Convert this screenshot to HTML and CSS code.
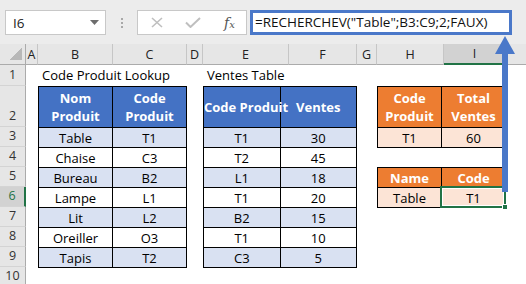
FILE: index.html
```html
<!DOCTYPE html>
<html lang="fr">
<head>
    <meta charset="UTF-8">
    <meta name="viewport" content="width=device-width, initial-scale=1.0">
    <title>RECHERCHEV</title>
    <link rel="stylesheet" href="styles.css">
</head>
<body>
    <div class="app">

        <div class="toolbar">
            <div class="name-box">
                <span>I6</span>
                <svg class="caret" width="9" height="5" viewBox="0 0 9 5"><path d="M0 0h9L4.5 5z" fill="#6d6d6d"/></svg>
            </div>
            <div class="grip">
                <span></span><span></span><span></span>
            </div>
            <div class="fx-box">
                <svg width="12" height="11" viewBox="0 0 12 11"><path d="M1 1l10 9M11 1L1 10" stroke="#bfbfbf" stroke-width="1.6" fill="none"/></svg>
                <svg width="16" height="11" viewBox="0 0 16 11"><path d="M1 5.5l4.5 4.5L15 1" stroke="#bfbfbf" stroke-width="2" fill="none"/></svg>
                <span class="fx">f<small>x</small></span>
            </div>
            <div class="formula">=RECHERCHEV("Table";B3:C9;2;FAUX)</div>
        </div>

        <div class="sheet">
            <div class="corner"></div>
            <div class="col-head">A</div>
            <div class="col-head">B</div>
            <div class="col-head">C</div>
            <div class="col-head">D</div>
            <div class="col-head">E</div>
            <div class="col-head">F</div>
            <div class="col-head">G</div>
            <div class="col-head">H</div>
            <div class="col-head active">I</div>
            <div class="col-head last"></div>

            <div class="row-head r1">1</div>
            <div class="row-head r2">2</div>
            <div class="row-head r3">3</div>
            <div class="row-head r4">4</div>
            <div class="row-head r5">5</div>
            <div class="row-head r6 active">6</div>
            <div class="row-head r7">7</div>
            <div class="row-head r8">8</div>
            <div class="row-head r9">9</div>
            <div class="row-head r10">10</div>

            <div class="label label-lookup">Code Produit Lookup</div>
            <div class="label label-ventes">Ventes Table</div>

            <table class="tbl tbl-products">
                <tr class="head"><th>Nom<br>Produit</th><th>Code<br>Produit</th></tr>
                <tr class="band"><td>Table</td><td>T1</td></tr>
                <tr><td>Chaise</td><td>C3</td></tr>
                <tr class="band"><td>Bureau</td><td>B2</td></tr>
                <tr><td>Lampe</td><td>L1</td></tr>
                <tr class="band"><td>Lit</td><td>L2</td></tr>
                <tr><td>Oreiller</td><td>O3</td></tr>
                <tr class="band"><td>Tapis</td><td>T2</td></tr>
            </table>

            <table class="tbl tbl-sales">
                <tr class="head"><th>Code Produit</th><th>Ventes</th></tr>
                <tr class="band"><td>T1</td><td>30</td></tr>
                <tr><td>T2</td><td>45</td></tr>
                <tr class="band"><td>L1</td><td>18</td></tr>
                <tr><td>T1</td><td>20</td></tr>
                <tr class="band"><td>B2</td><td>15</td></tr>
                <tr><td>T1</td><td>10</td></tr>
                <tr class="band"><td>C3</td><td>5</td></tr>
            </table>

            <table class="tbl orange tbl-total">
                <tr class="head"><th>Code<br>Produit</th><th>Total<br>Ventes</th></tr>
                <tr><td>T1</td><td>60</td></tr>
            </table>

            <table class="tbl orange tbl-code">
                <tr class="head short"><th>Name</th><th>Code</th></tr>
                <tr><td>Table</td><td class="selected">T1<span class="handle"></span></td></tr>
            </table>
        </div>

        <svg class="arrow" width="24" height="158" viewBox="0 0 24 158">
            <path d="M12 0L22 18H15V156H9V18H2z" fill="#4a78c9"/>
        </svg>
    </div>
</body>
</html>
```

FILE: styles.css
```css
* {
    margin: 0;
    padding: 0;
    box-sizing: border-box;
}

body {
    width: 526px;
    height: 284px;
    overflow: hidden;
    background: #fff;
    font-family: 'Open Sans', 'Liberation Sans', sans-serif;
    color: #000;
}

.app {
    position: relative;
    height: 284px;
}

/* formula bar */

.toolbar {
    height: 44px;
    background: #ececec;
    display: flex;
    align-items: flex-start;
    padding: 10px 0 0 5px;
}

.name-box {
    width: 101px;
    height: 25px;
    background: #fff;
    border: 1px solid #c8c8c8;
    display: flex;
    align-items: center;
    justify-content: space-between;
    padding: 0 6px 0 7px;
    font-size: 13.5px;
    color: #222;
}

.grip {
    width: 31px;
    height: 25px;
    display: flex;
    flex-direction: column;
    align-items: center;
    justify-content: center;
    gap: 2px;
}

.grip span {
    width: 2px;
    height: 2px;
    background: #a8a8a8;
}

.fx-box {
    width: 110px;
    height: 25px;
    background: #fff;
    border: 1px solid #c8c8c8;
    display: flex;
    align-items: center;
    gap: 22px;
    padding-left: 13px;
}

.fx {
    font-family: 'DejaVu Serif', serif;
    font-style: italic;
    font-size: 14px;
    color: #555;
    margin-left: 1px;
}

.fx small {
    font-size: 10px;
}

.formula {
    margin-left: 3px;
    width: 262px;
    height: 25px;
    background: #fff;
    border: 3px solid #4a78c9;
    font-size: 13.5px;
    line-height: 19px;
    padding-left: 2px;
    color: #111;
    white-space: nowrap;
}

/* sheet grid */

.sheet {
    display: grid;
    grid-template-columns: 26px 12px 75px 74px 16px 86px 68px 20px 67px 62px 20px;
    grid-template-rows: 21px 21px 41px repeat(8, 20px);
    font-size: 13px;
}

.corner {
    background: #e6e6e6 linear-gradient(to top left, #b8b8b8 0 50%, transparent 50%) no-repeat 10px 3px / 12px 13px;
    border-right: 1px solid #ababab;
    border-bottom: 1px solid #ababab;
}

.col-head {
    background: #e6e6e6;
    border-right: 1px solid #c6c6c6;
    border-bottom: 1px solid #ababab;
    font-size: 12.5px;
    color: #222;
    display: flex;
    align-items: center;
    justify-content: center;
}

.col-head.active {
    background: #d2d2d2;
    border-bottom: 2px solid #217346;
}

.col-head.last {
    border-right: none;
}

.row-head {
    grid-column: 1;
    background: #e6e6e6;
    border-right: 1px solid #ababab;
    border-bottom: 1px solid #d4d4d4;
    font-size: 12.5px;
    color: #333;
    display: flex;
    align-items: flex-end;
    justify-content: center;
    padding-bottom: 1px;
    line-height: 18px;
}

.row-head.active {
    background: #d2d2d2;
    color: #217346;
    border-right: 2px solid #217346;
}

.r1 { grid-row: 2; }
.r2 { grid-row: 3; }
.r3 { grid-row: 4; }
.r4 { grid-row: 5; }
.r5 { grid-row: 6; }
.r6 { grid-row: 7; }
.r7 { grid-row: 8; }
.r8 { grid-row: 9; }
.r9 { grid-row: 10; }
.r10 { grid-row: 11; }

.label {
    grid-row: 2;
    padding-left: 4px;
    line-height: 21px;
    white-space: nowrap;
}

.label-lookup { grid-column: 3 / 6; }
.label-ventes { grid-column: 6 / 8; }

/* tables */

.tbl {
    border-collapse: collapse;
    table-layout: fixed;
    width: 100%;
    align-self: start;
}

.tbl th,
.tbl td {
    border: 1px solid #000;
    text-align: center;
    line-height: 18px;
    padding: 0;
    height: 20px;
    white-space: nowrap;
}

.tbl th {
    background: #4472c4;
    color: #fff;
    font-weight: 700;
    height: 41px;
}

.tbl .head.short th {
    height: 20px;
}

.tbl .band td {
    background: #d9e1f2;
}

.tbl.orange th {
    background: #ed7d31;
}

.tbl.orange td {
    background: #fce4d6;
}

.tbl-products {
    grid-column: 3 / 5;
    grid-row: 3 / 11;
}

.tbl-sales {
    grid-column: 6 / 8;
    grid-row: 3 / 11;
}

.tbl-total {
    grid-column: 9 / 11;
    grid-row: 3 / 5;
}

.tbl-code {
    grid-column: 9 / 11;
    grid-row: 6 / 8;
}

.selected {
    position: relative;
}

.selected::after {
    content: '';
    position: absolute;
    inset: -2px -1px -1px -2px;
    border: 2px solid #217346;
    box-shadow: inset 0 0 0 1px #fff;
}

.handle {
    position: absolute;
    right: -3px;
    bottom: -3px;
    width: 6px;
    height: 6px;
    background: #217346;
    border: 1px solid #fff;
    z-index: 1;
}

.arrow {
    position: absolute;
    left: 493px;
    top: 36px;
}
```
